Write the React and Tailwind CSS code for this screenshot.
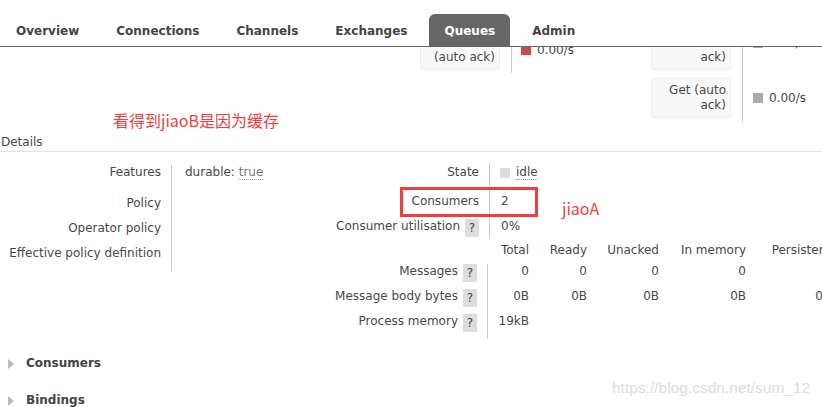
import React from 'react';

const tabs = ['Overview', 'Connections', 'Channels', 'Exchanges', 'Queues', 'Admin'];

function Help() {
  return (
    <span className="ml-[5px] inline-block w-[14px] h-[18px] leading-[18px] text-center bg-[#dddddd] text-[#444]">?</span>
  );
}

function LegendButton({ children }) {
  return (
    <div className="w-[80px] px-[4px] py-[4px] text-right leading-[15px] whitespace-nowrap bg-[#f8f8f8] border border-[#eeeeee] rounded-[3px]">
      {children}
    </div>
  );
}

function Rate({ color }) {
  return (
    <div className="flex items-center">
      <span className={`w-[10px] h-[10px] mr-[6px] ${color}`} />
      <span>0.00/s</span>
    </div>
  );
}

const cols = [
  { w: 'w-[41px]', head: 'Total', msg: '0', bytes: '0B', mem: '19kB' },
  { w: 'w-[58px]', head: 'Ready', msg: '0', bytes: '0B' },
  { w: 'w-[72px]', head: 'Unacked', msg: '0', bytes: '0B' },
  { w: 'w-[87px]', head: 'In memory', msg: '0', bytes: '0B' },
  { w: 'w-[85px]', head: 'Persistent', msg: '0', bytes: '0B' },
];

export default function App() {
  return (
    <div className="relative w-[822px] h-[407px] overflow-hidden bg-white text-[12px] leading-[15px] text-[#484848] font-['DejaVu_Sans',sans-serif]">
      {/* Top menu */}
      <nav className="flex items-end gap-[7px] h-[47px] pl-[1px] border-b border-[#666]">
        {tabs.map(t => (
          <a
            key={t}
            className={`flex items-center h-[32px] pt-[2px] px-[15px] font-bold ${
              t === 'Queues' ? 'bg-[#666] text-white rounded-t-[6px]' : 'text-[#444]'
            }`}
          >
            {t}
          </a>
        ))}
      </nav>

      {/* Message rates legend, scrolled under the menu */}
      <div className="h-[75px] overflow-hidden">
        <div className="-mt-[35px] flex items-start pl-[420px]">
          <div className="flex mt-[15px] shrink-0">
            <div className="w-[92px] pr-[11px] py-[3px] border-r border-[#ccc]">
              <LegendButton>Deliver<br />(auto ack)</LegendButton>
            </div>
            <div className="w-[139px] pl-[9px] flex items-center">
              <Rate color="bg-[#cb4b4b]" />
            </div>
          </div>
          <div className="flex flex-col shrink-0">
            <div className="flex">
              <div className="w-[92px] pr-[11px] pt-[3px] pb-[4px] border-r border-[#ccc]">
                <LegendButton>Get<br />(manual<br />ack)</LegendButton>
              </div>
              <div className="pl-[10px] flex items-center">
                <Rate color="bg-[#aaaaaa]" />
              </div>
            </div>
            <div className="flex">
              <div className="w-[92px] pr-[11px] pt-[4px] pb-[4px] border-r border-[#ccc]">
                <LegendButton>Get (auto<br />ack)</LegendButton>
              </div>
              <div className="pl-[10px] flex items-center">
                <Rate color="bg-[#aaaaaa]" />
              </div>
            </div>
          </div>
        </div>
      </div>

      {/* Details header */}
      <div className="flex items-end h-[30px] pl-[1px] pb-[1px] border-b border-[#e4e4e4]">Details</div>

      <div className="flex items-start pt-[1px]">
        {/* Left facts */}
        <div className="w-[300px] shrink-0 mt-[12px]">
          {[
            ['Features', <span>durable: <span className="text-[#777] border-b border-dotted border-[#aaa]">true</span></span>, 'h-[31px]'],
            ['Policy', '', 'h-[25px]'],
            ['Operator policy', '', 'h-[25px]'],
            ['Effective policy definition', '', 'h-[25px]'],
          ].map(([label, value, h]) => (
            <div key={label} className={`flex ${h}`}>
              <div className="w-[172px] pr-[10px] text-right border-r border-[#ccc]">{label}</div>
              <div className="pl-[13px]">{value}</div>
            </div>
          ))}
        </div>

        {/* Right facts */}
        <div className="mt-[10px] shrink-0">
          <div className="flex h-[29px]">
            <div className="w-[190px] pr-[10px] pt-[2px] text-right border-r border-[#ccc]">State</div>
            <div className="pl-[10px] pt-[2px] flex items-center self-start">
              <span className="w-[10px] h-[10px] bg-[#dddddd] mr-[6px]" />
              <span className="border-b border-dotted border-[#999] leading-[14px]">idle</span>
            </div>
          </div>
          <div className="flex h-[25px]">
            <div className="w-[190px] pr-[10px] pt-[2px] text-right border-r border-[#ccc]">Consumers</div>
            <div className="pl-[11px] pt-[2px]">2</div>
          </div>
          <div className="flex h-[21px]">
            <div className="w-[190px] pr-[10px] pt-[2px] flex justify-end items-start border-r border-[#ccc]">
              <span>Consumer utilisation</span>
              <Help />
            </div>
            <div className="pl-[11px] pt-[2px]">0%</div>
          </div>

          {/* Totals table */}
          <div className="flex h-[26px] pt-[5px]">
            <div className="w-[188px] shrink-0" />
            {cols.map(c => (
              <div key={c.head} className={`${c.w} shrink-0 text-right whitespace-nowrap`}>{c.head}</div>
            ))}
          </div>
          {[
            ['Messages', 'msg'],
            ['Message body bytes', 'bytes'],
            ['Process memory', 'mem'],
          ].map(([label, key]) => (
            <div key={label} className="flex h-[25px]">
              <div className="w-[188px] shrink-0 pr-[10px] flex justify-end items-start border-r border-[#ccc]">
                <span>{label}</span>
                <Help />
              </div>
              {cols.map(c => (
                <div key={c.head} className={`${c.w} shrink-0 text-right whitespace-nowrap`}>{c[key] || ''}</div>
              ))}
            </div>
          ))}
        </div>
      </div>

      {/* Collapsed sections */}
      <div className="mt-[6px]">
        {['Consumers', 'Bindings'].map(s => (
          <div key={s} className="flex items-center h-[37px] pl-[8px] gap-[12px]">
            <span className="w-0 h-0 border-y-[5px] border-y-transparent border-l-[6px] border-l-[#bbbbbb]" />
            <span className="font-bold text-[#444]">{s}</span>
          </div>
        ))}
      </div>

      {/* Annotations drawn over the screenshot */}
      <div className="absolute left-[113px] top-[111px] leading-[18px] text-[16px] text-[#f23d3d] font-['Noto_Sans_CJK_SC',sans-serif]">
        看得到jiaoB是因为缓存
      </div>
      <div className="absolute left-[400px] top-[187px] w-[138px] h-[30px] border-[3px] border-[#f23d3d]" />
      <div className="absolute left-[562px] top-[199px] leading-[18px] text-[16px] text-[#f23d3d] font-['Noto_Sans_CJK_SC',sans-serif]">
        jiaoA
      </div>
      <div className="absolute left-[612px] top-[379px] leading-[18px] text-[15.5px] text-[#dcdcdc] font-['Liberation_Sans',sans-serif]">
        https://blog.csdn.net/sum_12
      </div>
    </div>
  );
}
